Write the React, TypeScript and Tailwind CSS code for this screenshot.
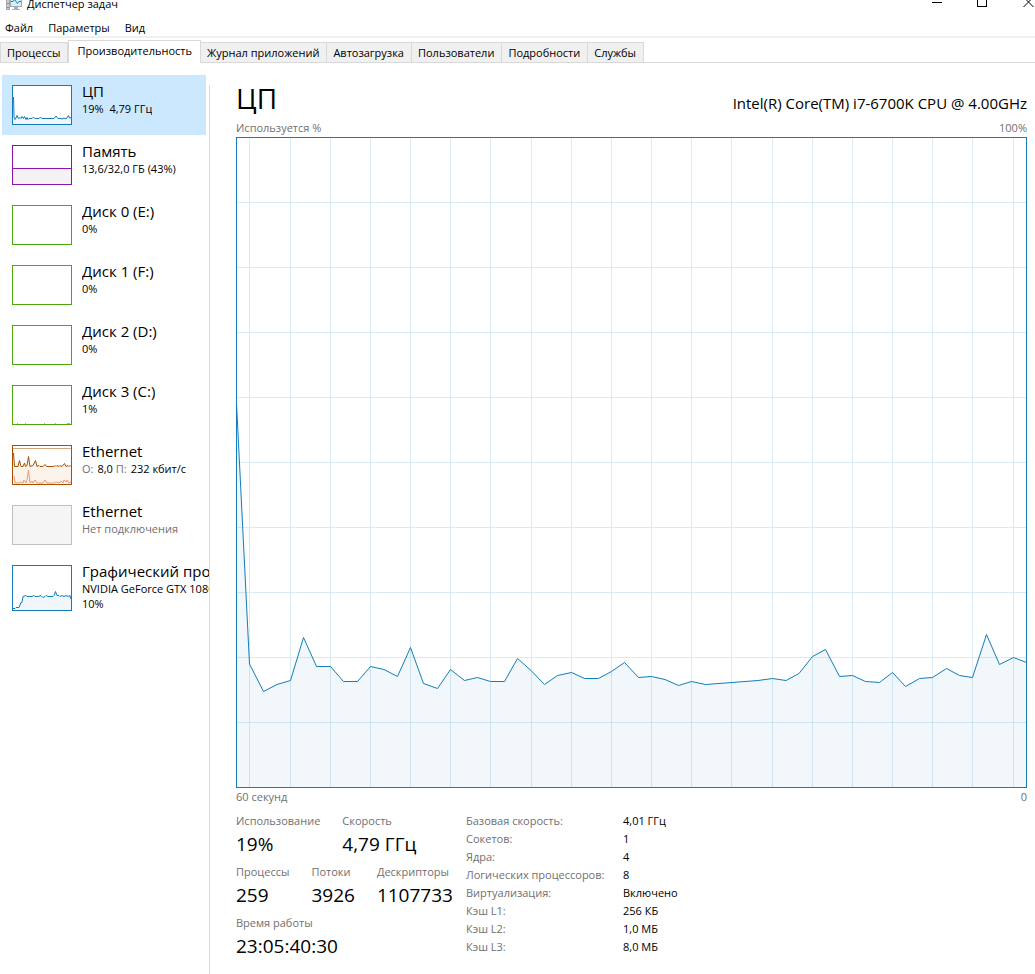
import React from 'react'

type Resource = {
  name: string
  lines: React.ReactNode[]
  graph: React.ReactNode
}

type Stat = {
  label: string
  value: string
}

const menu = ['Файл', 'Параметры', 'Вид']

const tabs = [
  'Процессы',
  'Производительность',
  'Журнал приложений',
  'Автозагрузка',
  'Пользователи',
  'Подробности',
  'Службы',
]

const statRows: Stat[][] = [
  [
    { label: 'Использование', value: '19%' },
    { label: 'Скорость', value: '4,79 ГГц' },
  ],
  [
    { label: 'Процессы', value: '259' },
    { label: 'Потоки', value: '3926' },
    { label: 'Дескрипторы', value: '1107733' },
  ],
  [{ label: 'Время работы', value: '23:05:40:30' }],
]

const details: Stat[] = [
  { label: 'Базовая скорость:', value: '4,01 ГГц' },
  { label: 'Сокетов:', value: '1' },
  { label: 'Ядра:', value: '4' },
  { label: 'Логических процессоров:', value: '8' },
  { label: 'Виртуализация:', value: 'Включено' },
  { label: 'Кэш L1:', value: '256 КБ' },
  { label: 'Кэш L2:', value: '1,0 МБ' },
  { label: 'Кэш L3:', value: '8,0 МБ' },
]

const gridX = [13, 54, 94, 134, 174, 214, 254, 295, 335, 375, 415, 455, 495, 536, 576, 616, 656, 696, 736, 777]
const gridY = [65, 130, 195, 260, 325, 390, 455, 520, 585]

const cpuLine =
  '0.5,266 13.5,527 27.5,554.5 41,547.5 54.5,543.5 67.5,500.5 80.5,529.5 94.5,529.5 107.5,544.5 121.5,544.5 134.5,529.5 148,532.5 161.5,539.5 174.5,510.5 187.5,546.5 201.5,551.5 214.5,532.5 228.5,543.5 241.5,540.5 254.5,544.5 268.5,544.5 281.5,521.5 295,533.5 308.5,547.5 321.5,538.5 335.5,535.5 348.5,541.5 362.5,541.5 375.5,534.5 388.5,525.5 402.5,540.5 415.5,539.5 429,542.5 442.5,548.5 455.5,544.5 469.5,547.5 496,545.5 522,543.5 536.5,541.5 550,543.5 563,536.5 576.5,519.5 589.5,512.5 603.5,539.5 616.5,538.5 629.5,544.5 643.5,545.5 656.5,535.5 669.5,549.5 683.5,541.5 696.5,540.5 710.5,531.5 723.5,538.5 736.5,540.5 750.5,497.5 763.5,527.5 777.5,520.5 790.5,525.5'

const CpuChart: React.FC = () => (
  <svg
    viewBox="0 0 791 651"
    preserveAspectRatio="none"
    className="block h-[651px] w-full bg-white"
    role="img"
    aria-label="Используется %"
  >
    {gridX.map((x) => (
      <path key={x} d={`M${x + 0.5} 1V650`} stroke="#d9eaf4" />
    ))}
    {gridY.map((y) => (
      <path key={y} d={`M1 ${y + 0.5}H790`} stroke="#d9eaf4" />
    ))}
    <polygon points={`0.5,650 ${cpuLine} 790.5,650`} fill="#117dbb" fillOpacity="0.06" />
    <polyline points={cpuLine} fill="none" stroke="#117dbb" />
    <rect x="0.5" y="0.5" width="790" height="650" fill="none" stroke="#117dbb" />
  </svg>
)

type GraphProps = {
  color: string
  fill?: string
  height?: number
  children?: React.ReactNode
}

const MiniGraph: React.FC<GraphProps> = ({ color, fill = '#fff', height = 40, children }) => (
  <svg width="60" height={height} className="mt-[3px] block shrink-0" aria-hidden="true">
    <rect x="0.5" y="0.5" width="59" height={height - 1} fill={fill} />
    {children}
    <rect x="0.5" y="0.5" width="59" height={height - 1} fill="none" stroke={color} />
  </svg>
)

const cpuMini =
  '1.5,12 2,32 3,34.5 4,33 5,30.5 6.5,33.5 8,32.5 9,33.5 10,31.5 11.5,33.5 12.5,31.5 14,34.5 15,32.5 16,34.5 17,33.5 20,33.5 21.5,32 23,33.5 27,33.5 28.5,32 30,33.5 42,33.5 44,31 46,33.5 49,33.5 50,34 52,33 54,34 56.5,30.5 57.5,33 59,32.5'
const sendMini =
  '1.5,8 2.5,21.5 6,21.5 7.5,15.5 9,21.5 11,21.5 12.5,18 13.5,21.5 15,20.5 16.5,11.5 18,21.5 21,20.5 23.5,15.5 25,21.5 27,20.5 28,21.5 31,21.5 33,19.5 34.5,21.5 42,21.5 43,20.5 44,21.5 45,20.5 47,21.5 48,20.5 50,21.5 52.5,18.5 54,21.5 56,20.5 57,21.5 58,20.5 59,21.5'
const receiveMini =
  '2,31 3,38 7,38 9,37 11,38 12,35 14,38 15,35 16.5,25 18,38 20,36 21,38 23,35 25,38 31,38 33,35 35,38 42,38 44,37 47,38 49,36 51,38 52,35 54,37 55,35 57,38 59,37'
const gpuMini =
  '1,43.5 3,43.5 4,42.5 7,42.5 9,37.5 10,37.5 11,31.5 14,30.5 15,31.5 20,31.5 22,30.5 23,31.5 26,31.5 29,30.5 31,32.5 33,31.5 34,30.5 36,31.5 41,31.5 42,30.5 43.5,26.5 45,30.5 47,30.5 48,31.5 50,30.5 52,31.5 54,30.5 56,31.5 58,30.5 59,34'

const resources: Resource[] = [
  {
    name: 'ЦП',
    lines: ['19%\u00a0 4,79 ГГц'],
    graph: (
      <MiniGraph color="#117dbb">
        <polygon points={`1,39 ${cpuMini} 59,39`} fill="#f1f6fa" />
        <polyline points={cpuMini} fill="none" stroke="#117dbb" />
      </MiniGraph>
    ),
  },
  {
    name: 'Память',
    lines: ['13,6/32,0 ГБ (43%)'],
    graph: (
      <MiniGraph color="#8b12ae">
        <rect x="1" y="23" width="58" height="16" fill="#f4f2f4" />
        <path d="M1 23.5H59" stroke="#8b12ae" />
      </MiniGraph>
    ),
  },
  { name: 'Диск 0 (E:)', lines: ['0%'], graph: <MiniGraph color="#4da60c" /> },
  { name: 'Диск 1 (F:)', lines: ['0%'], graph: <MiniGraph color="#4da60c" /> },
  { name: 'Диск 2 (D:)', lines: ['0%'], graph: <MiniGraph color="#4da60c" /> },
  {
    name: 'Диск 3 (C:)',
    lines: ['1%'],
    graph: (
      <MiniGraph color="#4da60c">
        <path d="M5 38.5h1M13 38.5h1M32 38.5h1M43 38.5h1M55 38.5h3" stroke="#4da60c" strokeOpacity="0.6" />
      </MiniGraph>
    ),
  },
  {
    name: 'Ethernet',
    lines: [
      <>
        <span className="mr-1 text-[#707070]">О:</span>8,0 <span className="mr-1 text-[#707070]">П:</span>232 кбит/с
      </>,
    ],
    graph: (
      <MiniGraph color="#a74f01">
        <path d="M1 3.5H59" stroke="#d3a780" />
        <polygon points={`1,39 ${sendMini} 59,39`} fill="#fcf3eb" />
        <polyline points={receiveMini} fill="none" stroke="#ee9a74" />
        <polyline points={sendMini} fill="none" stroke="#a74f01" />
      </MiniGraph>
    ),
  },
  {
    name: 'Ethernet',
    lines: [<span className="text-[#707070]">Нет подключения</span>],
    graph: <MiniGraph color="#bfbfbf" fill="#f5f5f5" />,
  },
  {
    name: 'Графический процессор 0',
    lines: ['NVIDIA GeForce GTX 1080', '10%'],
    graph: (
      <MiniGraph color="#117dbb" height={46}>
        <polygon points={`1,45 ${gpuMini} 59,45`} fill="#f1f6fa" />
        <polyline points={gpuMini} fill="none" stroke="#117dbb" />
      </MiniGraph>
    ),
  },
]

const AppIcon: React.FC = () => (
  <svg width="16" height="16" viewBox="0 0 16 16" aria-hidden="true">
    <rect x="0.5" y="1.5" width="3" height="12" fill="#c9cdd0" stroke="#a3a9ad" />
    <path d="M1 7.5h2" stroke="#3fb34f" />
    <path d="M1 11.5h2" stroke="#8a9094" />
    <rect x="4.5" y="0.5" width="11" height="10" fill="#d7effb" stroke="#a3a9ad" />
    <path d="M5 5.500h2l1.500-2 3 4 1.500-2h2" fill="none" stroke="#1880bd" />
    <path d="M8 11h4v2h2v1H6v-1h2z" fill="#a9afb3" />
  </svg>
)

const App: React.FC = () => {
  return (
    <div className="flex min-h-screen flex-col overflow-hidden bg-white font-['Open_Sans','Noto_Sans',sans-serif] text-[11px] leading-4 text-black">
      <header className="-mt-1 flex h-6 items-start justify-between pr-px pl-[6px]">
        <div className="flex items-center gap-[5px]">
          <AppIcon />
          <h1>Диспетчер задач</h1>
        </div>
        <div className="flex gap-[35px]">
          <button type="button" aria-label="Свернуть">
            <svg width="10" height="16">
              <path d="M0 6.500H10" stroke="#000" />
            </svg>
          </button>
          <button type="button" aria-label="Развернуть">
            <svg width="10" height="16">
              <rect x="0.5" y="1.5" width="9" height="9" fill="none" stroke="#000" />
            </svg>
          </button>
          <button type="button" aria-label="Закрыть">
            <svg width="12" height="16">
              <path d="M1.500 1L11.500 11M11.500 1L1.500 11" stroke="#000" />
            </svg>
          </button>
        </div>
      </header>

      <nav className="flex gap-[15px] border-b-2 border-[#f0f0f0] pl-[5px]">
        {menu.map((item) => (
          <button key={item} type="button">
            {item}
          </button>
        ))}
      </nav>

      <div role="tablist" className="mt-[2px] flex items-end">
        {tabs.map((tab) =>
          tab === 'Производительность' ? (
            <button
              key={tab}
              type="button"
              role="tab"
              aria-selected="true"
              className="h-[23px] border-x border-t border-[#d9d9d9] bg-white px-2 pb-[2px]"
            >
              {tab}
            </button>
          ) : (
            <button
              key={tab}
              type="button"
              role="tab"
              aria-selected="false"
              className="h-[21px] border-y border-r border-[#d9d9d9] bg-[#f0f0f0] pr-[7px] pl-[6px] first:border-l"
            >
              {tab}
            </button>
          )
        )}
        <div className="flex-1 border-b border-[#d9d9d9]" />
      </div>

      <div className="flex flex-1 pt-3">
        <aside className="flex w-[210px] shrink-0">
          <ul className="min-w-0 flex-1 pl-[2px]">
            {resources.map((item, i) => (
              <li key={i}>
                <button
                  type="button"
                  className={
                    i === 0
                      ? 'flex h-[60px] w-[204px] gap-[10px] bg-[#cce8ff] pt-[7px] pl-[10px] text-left'
                      : 'flex min-h-[60px] w-full gap-[10px] pt-[7px] pl-[10px] text-left'
                  }
                >
                  {item.graph}
                  <span className="block min-w-0 overflow-hidden whitespace-nowrap">
                    <span className="mb-px block text-[15px] leading-[18px]">{item.name}</span>
                    {item.lines.map((line, n) => (
                      <span key={n} className="block leading-[15px]">
                        {line}
                      </span>
                    ))}
                  </span>
                </button>
              </li>
            ))}
          </ul>
          <div className="mt-[10px] w-px bg-[#d9d9d9]" />
        </aside>

        <main className="min-w-0 flex-1 pr-2 pl-[26px]">
          <div className="flex h-[45px] items-center justify-between">
            <h2 className="text-[28px] leading-9">ЦП</h2>
            <p className="pt-[11px] text-[15px] leading-5">Intel(R) Core(TM) i7-6700K CPU @ 4.00GHz</p>
          </div>
          <div className="flex justify-between pb-px text-[#707070]">
            <span>Используется %</span>
            <span>100%</span>
          </div>
          <CpuChart />
          <div className="flex justify-between pt-px text-[#707070]">
            <span>60 секунд</span>
            <span>0</span>
          </div>

          <div className="flex gap-3 pt-[7px]">
            <div className="flex w-[218px] flex-col gap-[5px]">
              {statRows.map((row, i) => (
                <dl key={i} className="flex gap-[22px]">
                  {row.map((stat) => (
                    <div key={stat.label}>
                      <dt className="leading-[18px] text-[#707070]">{stat.label}</dt>
                      <dd className="text-[19px] leading-7">{stat.value}</dd>
                    </div>
                  ))}
                </dl>
              ))}
            </div>
            <table className="self-start text-left">
              <tbody>
                {details.map((detail) => (
                  <tr key={detail.label} className="leading-[18px]">
                    <th scope="row" className="w-[157px] p-0 font-normal text-[#707070]">
                      {detail.label}
                    </th>
                    <td className="p-0">{detail.value}</td>
                  </tr>
                ))}
              </tbody>
            </table>
          </div>
        </main>
      </div>
    </div>
  )
}

export default App
